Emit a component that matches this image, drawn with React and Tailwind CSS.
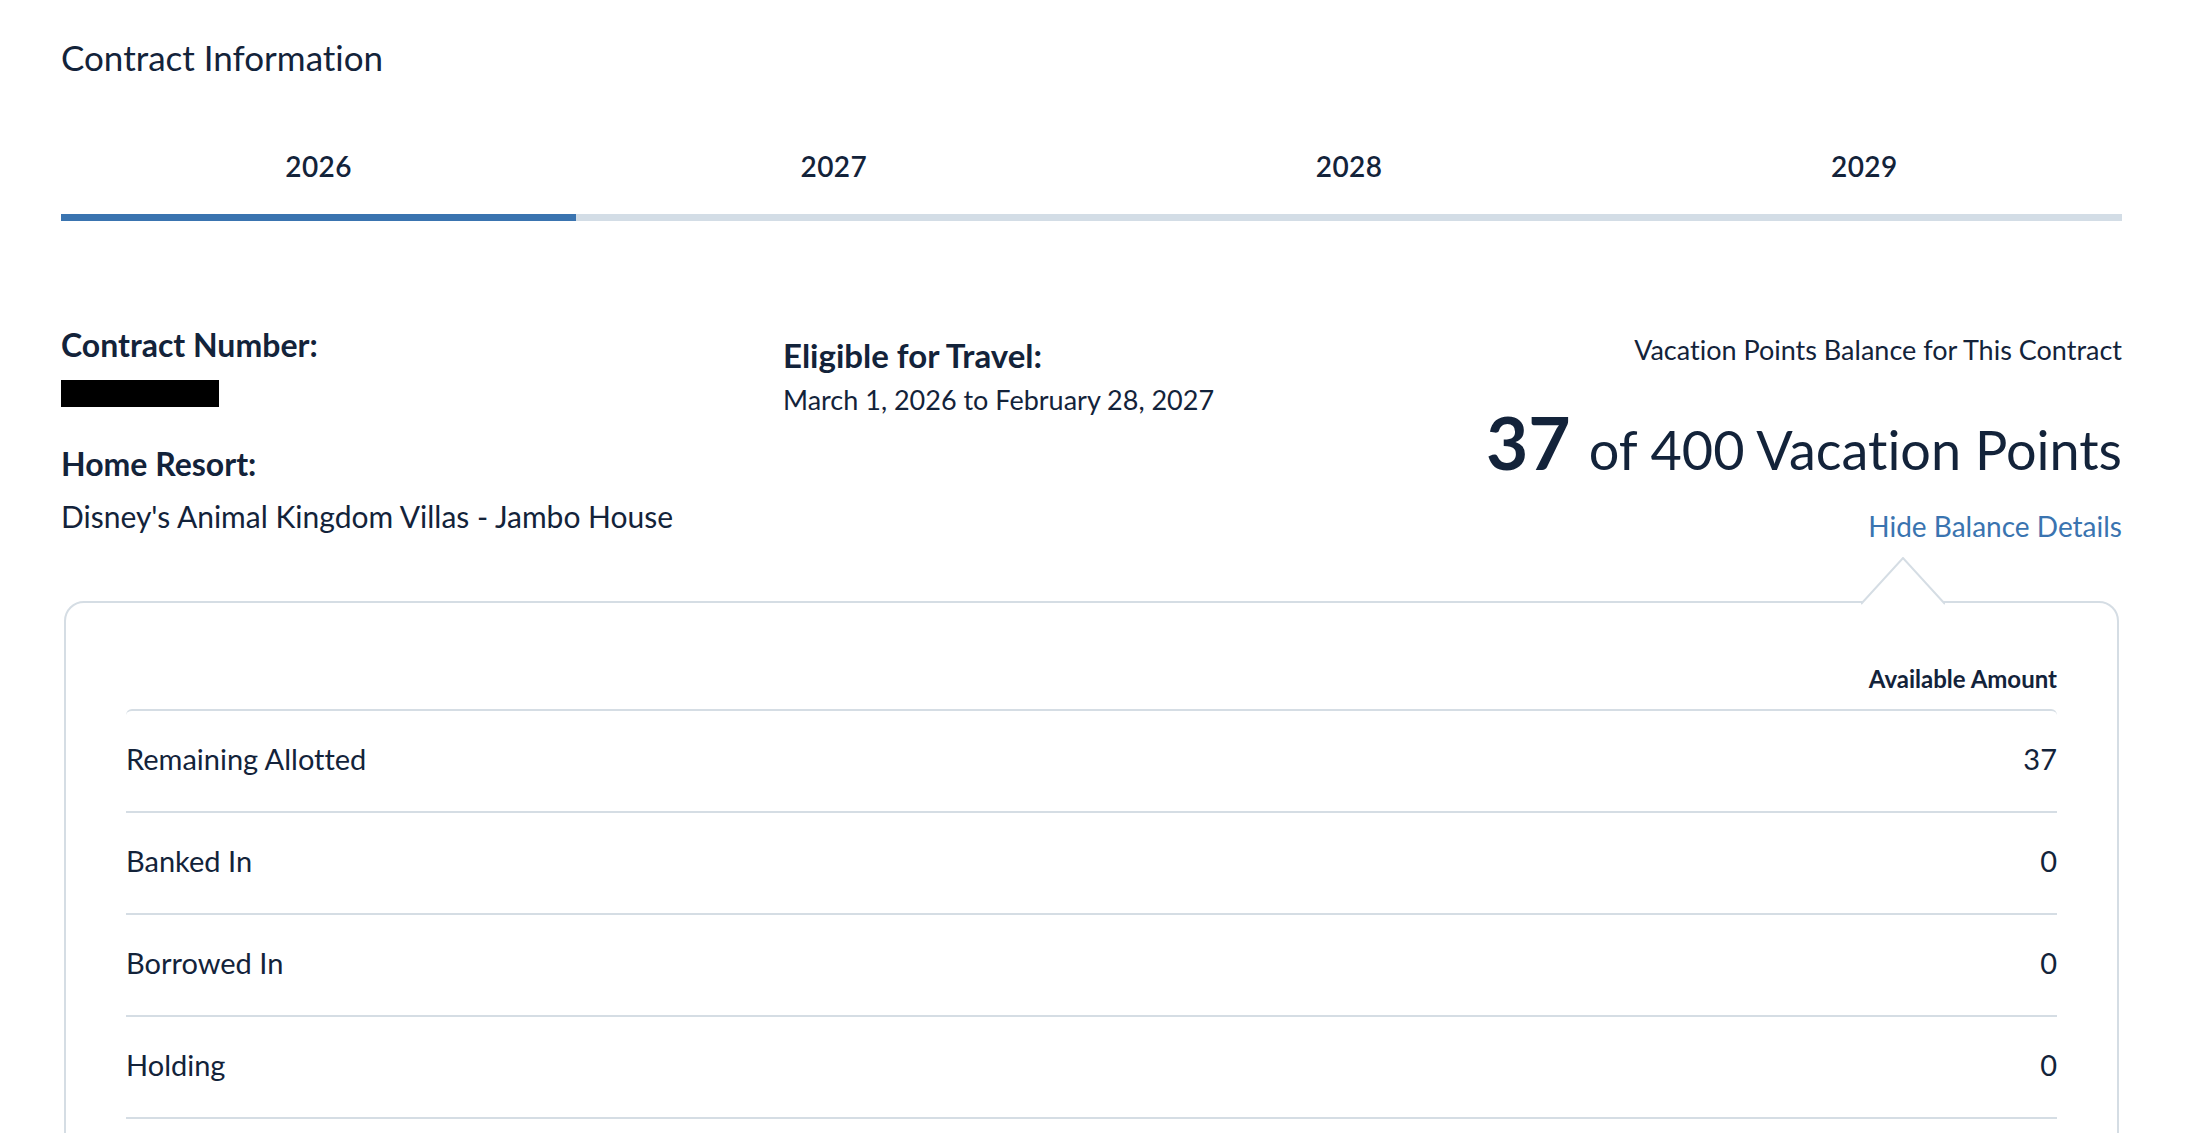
import { useState } from 'react';

const years = ['2026', '2027', '2028', '2029'];

const balanceRows = [
  { label: 'Remaining Allotted', amount: 37 },
  { label: 'Banked In', amount: 0 },
  { label: 'Borrowed In', amount: 0 },
  { label: 'Holding', amount: 0 },
];

function App() {
  const [activeYear, setActiveYear] = useState('2026');
  const [showDetails, setShowDetails] = useState(true);

  return (
    <div className="min-h-screen bg-white font-['Lato',sans-serif] [font-variant-ligatures:none] text-[#13233a] pl-[61px] pr-[70px] pt-[37px] pb-10 overflow-hidden">
      <h1 className="text-[35px] leading-[40px] font-normal">Contract Information</h1>

      {/* year tabs */}
      <div className="grid grid-cols-4 mt-[69px]">
        {years.map((year) => (
          <button
            key={year}
            onClick={() => setActiveYear(year)}
            className="flex flex-col cursor-pointer"
          >
            <span className="text-[28px] leading-[40px] font-semibold text-center tracking-[0.5px]">{year}</span>
            <span className={`mt-[28px] h-[7px] ${activeYear === year ? 'bg-[#3a74b0]' : 'bg-[#d3dde6]'}`}></span>
          </button>
        ))}
      </div>

      {/* contract summary */}
      <div className="flex mt-[108px]">
        <div className="w-[722px] shrink-0">
          <div className="text-[32px] leading-[32px] font-bold">Contract Number:</div>
          <div className="mt-[19px] w-[158px] h-[27px] bg-black"></div>
          <div className="mt-[41px] text-[32px] leading-[32px] font-bold">Home Resort:</div>
          <div className="mt-[19px] text-[30px] leading-[34px]">Disney's Animal Kingdom Villas - Jambo House</div>
        </div>

        <div className="pt-[10px]">
          <div className="text-[33px] leading-[32px] font-bold">Eligible for Travel:</div>
          <div className="mt-[15px] text-[27px] leading-[28px]">March 1, 2026 to February 28, 2027</div>
        </div>

        <div className="flex-1 flex flex-col items-end pt-[7px]">
          <div className="text-[27px] leading-[28px]">Vacation Points Balance for This Contract</div>
          <div className="mt-[38px] h-[80px] leading-[80px] flex items-baseline gap-[18px]">
            <span className="text-[73px] font-bold">37</span>
            <span className="text-[54px]">of 400 Vacation Points</span>
          </div>
          <button
            onClick={() => setShowDetails(!showDetails)}
            className="mt-[29px] text-[28px] leading-[30px] text-[#3a74b0] cursor-pointer"
          >
            {showDetails ? 'Hide Balance Details' : 'Show Balance Details'}
          </button>
        </div>
      </div>

      {/* balance breakdown card */}
      {showDetails && (
        <div className="relative mt-[60px] mx-[3px] border-2 border-[#d5dde4] rounded-[20px] px-[60px] pt-[64px] pb-10">
          <svg className="absolute right-[172px] -top-[46px]" width="84" height="48" viewBox="0 0 84 48">
            <polygon points="0,47 42,1 84,47" fill="white" />
            <polyline points="0,47 42,1 84,47" fill="none" stroke="#d5dde4" strokeWidth="2" />
          </svg>

          <div className="text-right text-[24px] leading-[24px] font-bold">Available Amount</div>
          <div className="mt-[18px] border-t-2 border-[#d5dde4] rounded-t-[6px]">
            {balanceRows.map((row) => (
              <div
                key={row.label}
                className="flex justify-between items-center h-[102px] pb-[4px] border-b-2 border-[#d5dde4] text-[29px]"
              >
                <span>{row.label}</span>
                <span>{row.amount}</span>
              </div>
            ))}
          </div>
        </div>
      )}
    </div>
  );
}

export default App;
